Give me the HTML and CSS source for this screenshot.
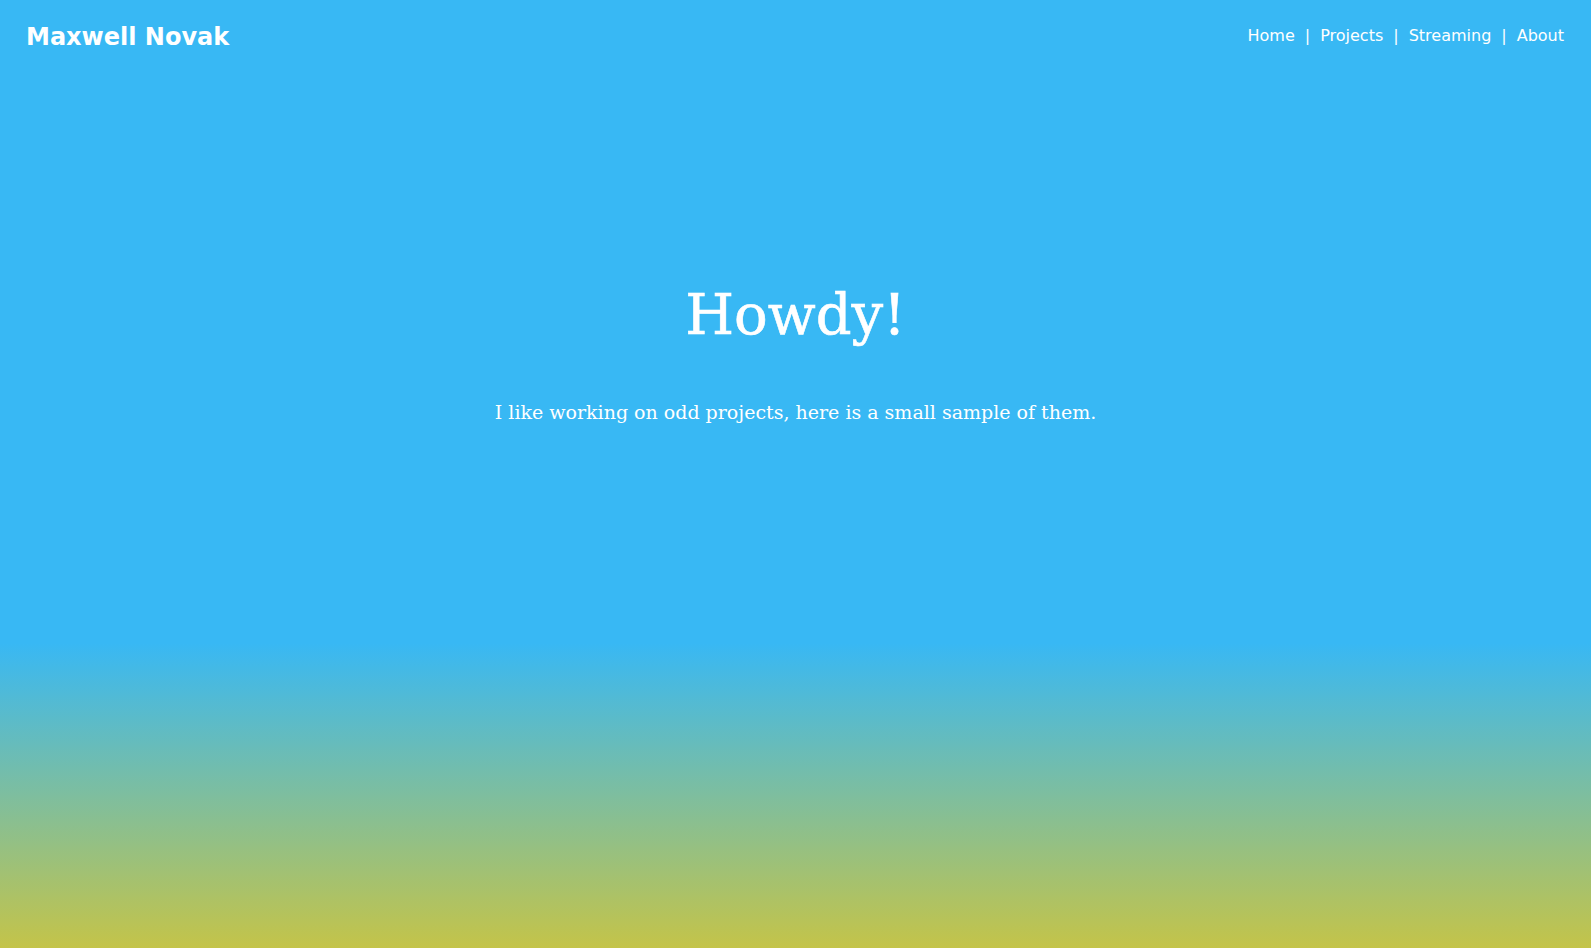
FILE: index.html
```html
<!DOCTYPE html>
<html lang="en">
<head>
<meta charset="utf-8">
<title>Maxwell Novak</title>
<link rel="stylesheet" href="styles.css">
</head>
<body>
<div class="page">
  <header class="header">
    <a class="brand" href="#">Maxwell Novak</a>
    <nav class="nav">
      <a href="#">Home</a><span class="sep">|</span>
      <a href="#">Projects</a><span class="sep">|</span>
      <a href="#">Streaming</a><span class="sep">|</span>
      <a href="#">About</a>
    </nav>
  </header>
  <main class="hero">
    <h1 class="hero-title">Howdy!</h1>
    <p class="hero-text">I like working on odd projects, here is a small sample of them.</p>
  </main>
</div>
</body>
</html>
```

FILE: styles.css
```css
html, body {
  margin: 0;
  padding: 0;
  height: 100%;
}
body {
  font-family: "DejaVu Sans", sans-serif;
  color: #fff;
  background: #38b8f4;
}
.page {
  min-height: 948px;
  display: flex;
  flex-direction: column;
  background: linear-gradient(to bottom, #38b8f4 0px, #38b8f4 643px, #c4c449 948px);
}
.header {
  display: flex;
  justify-content: space-between;
  align-items: center;
  padding: 23px 27px 0 26px;
  height: 28px;
}
.brand {
  color: #fff;
  text-decoration: none;
  font-weight: bold;
  font-size: 24px;
}
.nav {
  display: flex;
  align-items: center;
  font-size: 16px;
  padding-bottom: 3px;
}
.nav a {
  color: #fff;
  text-decoration: none;
}
.sep {
  margin: 0 10px;
}
.hero {
  text-align: center;
  padding-top: 230px;
}
.hero-title {
  margin: 0;
  font-family: "DejaVu Serif", serif;
  font-weight: normal;
  font-size: 56px;
  line-height: 1.2;
  -webkit-text-stroke: 0.6px #fff;
}
.hero-text {
  margin: 53px 0 0;
  font-family: "DejaVu Serif", serif;
  font-size: 19px;
}
```
